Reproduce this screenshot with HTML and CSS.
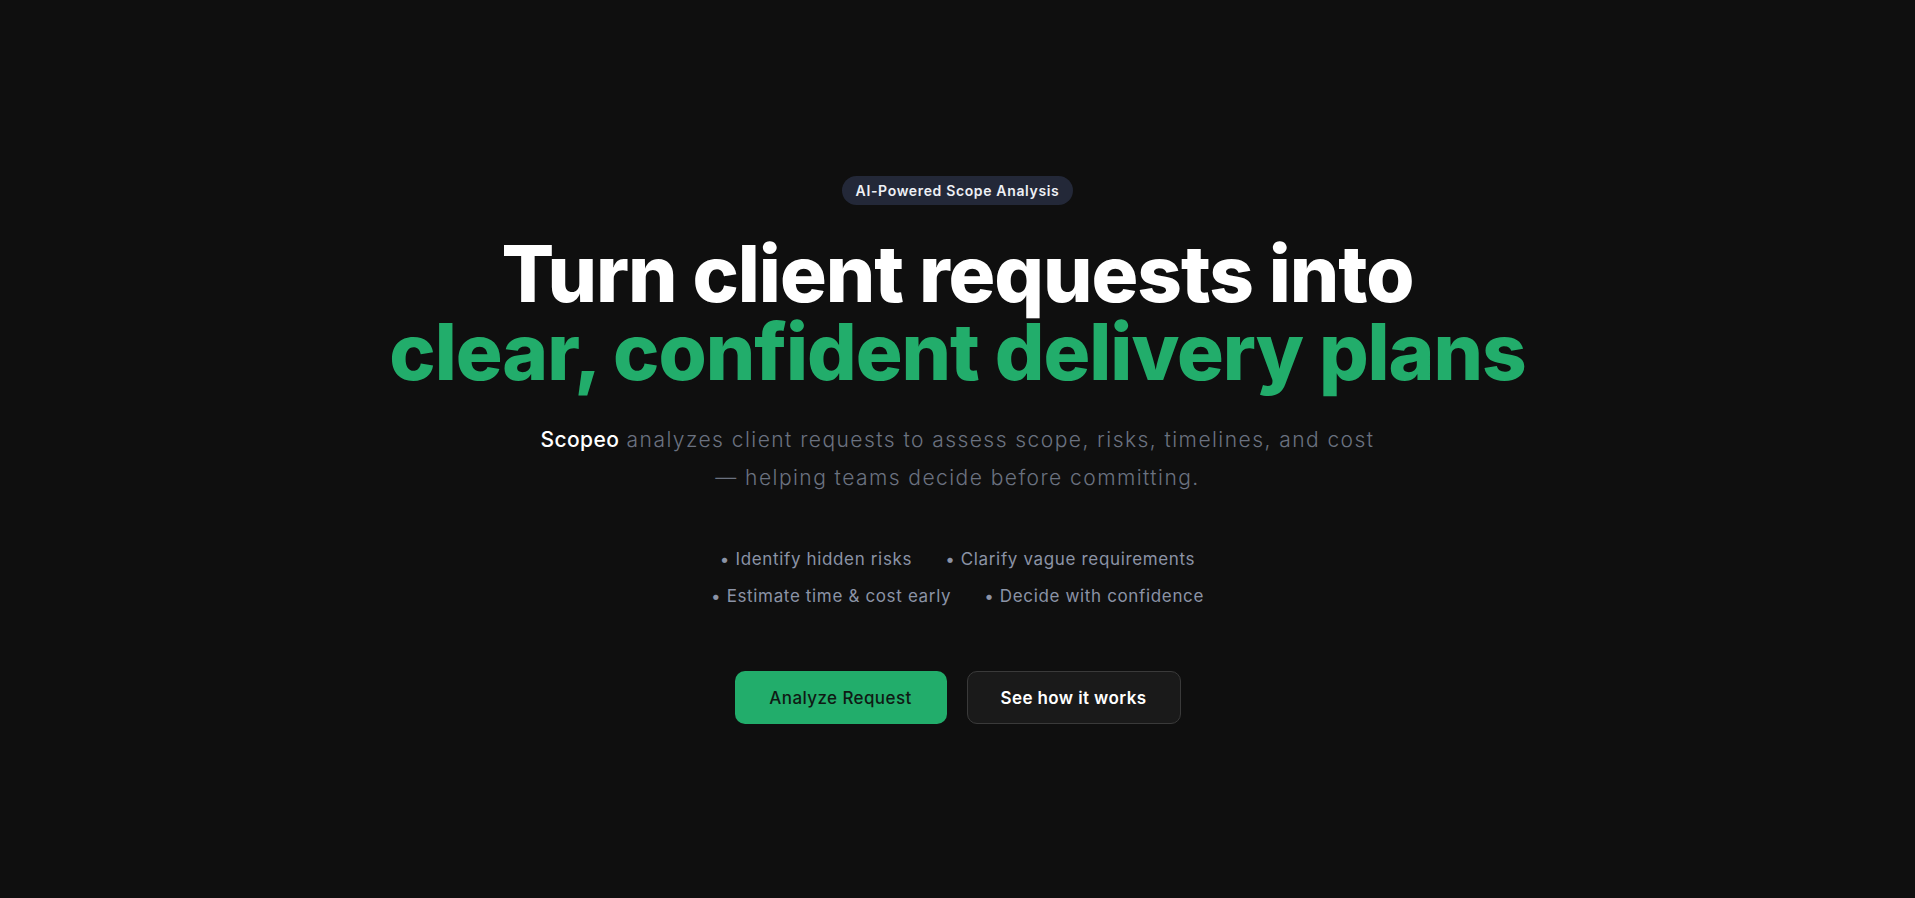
FILE: index.html
```html
<!DOCTYPE html>
<html lang="en">
<head>
    <meta charset="UTF-8">
    <meta name="viewport" content="width=device-width, initial-scale=1.0">
    <title>Scopeo — AI-Powered Scope Analysis</title>
    <link rel="stylesheet" href="styles.css">
</head>
<body>
    <main class="hero">
        <span class="badge">AI-Powered Scope Analysis</span>

        <h1 class="headline">
            <span class="line">Turn client requests into</span>
            <span class="line accent">clear, confident delivery plans</span>
        </h1>

        <p class="lead">
            <strong class="brand">Scopeo</strong> analyzes client requests to assess scope, risks, timelines, and cost<br>
            — helping teams decide before committing.
        </p>

        <div class="points">
            <ul class="points-row">
                <li>• Identify hidden risks</li>
                <li>• Clarify vague requirements</li>
            </ul>
            <ul class="points-row">
                <li>• Estimate time &amp; cost early</li>
                <li>• Decide with confidence</li>
            </ul>
        </div>

        <div class="actions">
            <button class="btn btn-primary">Analyze Request</button>
            <button class="btn btn-secondary">See how it works</button>
        </div>
    </main>
</body>
</html>
```

FILE: styles.css
```css
* {
    margin: 0;
    padding: 0;
    box-sizing: border-box;
}

body {
    font-family: 'Inter', 'Open Sans', sans-serif;
    background: #0f0f0f;
    color: #fff;
    min-height: 100vh;
}

.hero {
    min-height: 100vh;
    display: flex;
    flex-direction: column;
    align-items: center;
    justify-content: center;
    text-align: center;
    padding: 2px 2rem 0;
}

.badge {
    display: inline-block;
    font-size: 14px;
    font-weight: 600;
    line-height: 19px;
    letter-spacing: 0.65px;
    padding: 5px 14px;
    border-radius: 999px;
    background: #232838;
    color: #eef0f5;
}

.headline {
    margin-top: 30px;
    font-size: 78px;
    font-weight: 800;
    letter-spacing: -1.05px;
    color: #fff;
}

.headline .line {
    display: block;
    line-height: 78px;
}

.accent {
    color: #22ad6b;
}

.lead {
    margin-top: 30px;
    font-size: 21px;
    font-weight: 300;
    line-height: 38px;
    letter-spacing: 1.45px;
    color: #6b7280;
}

.brand {
    font-weight: 500;
    letter-spacing: 0.4px;
    color: #fff;
}

.points {
    margin-top: 50px;
    display: flex;
    flex-direction: column;
    gap: 13px;
}

.points-row {
    list-style: none;
    display: flex;
    justify-content: center;
    gap: 33px;
    font-size: 17px;
    line-height: 24px;
    letter-spacing: 0.65px;
    color: #8b93a6;
}

.actions {
    margin-top: 63px;
    display: flex;
    gap: 20px;
}

.btn {
    font-family: inherit;
    font-size: 17px;
    letter-spacing: 0.4px;
    height: 53px;
    padding: 0 24px;
    border-radius: 10px;
    cursor: pointer;
}

.btn-primary {
    width: 212px;
    background: #22ad6b;
    border: none;
    color: #0f1a14;
    font-weight: 500;
}

.btn-secondary {
    width: 214px;
    background: #1a1a1a;
    border: 1px solid #3a3a3a;
    color: #fff;
    font-weight: 600;
}
```
